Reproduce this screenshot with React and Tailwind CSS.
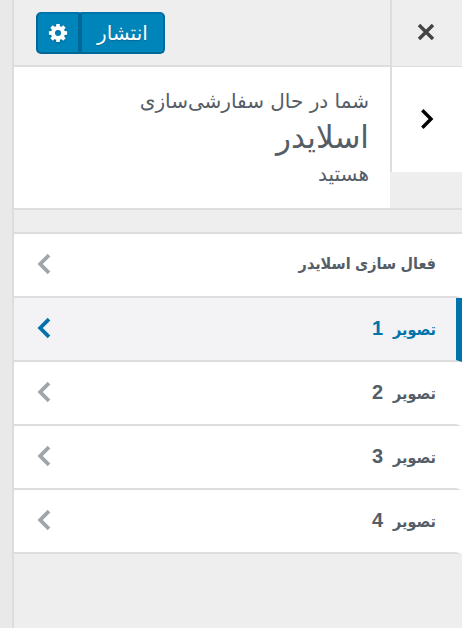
const SECTIONS = [
  { id: "enable", label: "فعال سازی اسلایدر" },
  { id: "image-1", label: "تصویر", number: 1, active: true },
  { id: "image-2", label: "تصویر", number: 2 },
  { id: "image-3", label: "تصویر", number: 3 },
  { id: "image-4", label: "تصویر", number: 4 },
];

const GEAR_TEETH = [0, 45, 90, 135, 180, 225, 270, 315];

const GearIcon = () => (
  <svg viewBox="0 0 20 20" className="h-5 w-5 drop-shadow-[0_1px_1px_#006799]" fill="none" aria-hidden="true">
    <circle cx="10" cy="10" r="5" stroke="currentColor" strokeWidth="4" />
    {GEAR_TEETH.map((angle) => (
      <path key={angle} d="M8 4 8.3 0.9h3.4L12 4z" fill="currentColor" transform={`rotate(${angle} 10 10)`} />
    ))}
  </svg>
);

const CloseIcon = () => (
  <svg viewBox="0 0 18 18" className="h-[18px] w-[18px]" fill="none" stroke="currentColor" strokeWidth="3.4" aria-hidden="true">
    <path d="M2 2l14 14M16 2L2 16" />
  </svg>
);

const BackIcon = () => (
  <svg viewBox="0 0 14 22" className="h-[22px] w-3.5" fill="none" stroke="currentColor" strokeWidth="3.4" aria-hidden="true">
    <path d="M2.3 2.3L11 11l-8.7 8.7" />
  </svg>
);

const ChevronIcon = () => (
  <svg viewBox="0 0 14 22" className="h-[22px] w-3.5" fill="none" stroke="currentColor" strokeWidth="3.8" aria-hidden="true">
    <path d="M12 2.2L3.2 11l8.8 8.8" />
  </svg>
);

const Header = () => (
  <header className="flex h-[67px]">
    <button
      type="button"
      aria-label="بستن"
      className="flex w-[72px] items-center justify-center border-b border-l-2 border-[#ddd] pr-0.5 pb-0.5 text-[#444]"
    >
      <CloseIcon />
    </button>
    <div className="flex flex-1 items-center justify-end border-b-2 border-[#ddd] pl-[22px]">
      <div className="flex h-[42px] text-white">
        <button
          type="button"
          className="rounded-r-[5px] border-2 border-[#006799] border-t-[#0073aa] bg-[#0085ba] px-[15px] text-xl leading-none [text-shadow:0_1px_1px_#006799]"
        >
          انتشار
        </button>
        <button
          type="button"
          aria-label="تنظیمات"
          className="rounded-l-[5px] border-2 border-[#006799] border-t-[#0073aa] bg-[#0085ba] px-[10px]"
        >
          <GearIcon />
        </button>
      </div>
    </div>
  </header>
);

const PanelTitle = () => (
  <div className="flex items-start border-b-2 border-[#ddd]">
    <button
      type="button"
      aria-label="بازگشت"
      className="flex h-[105px] w-[72px] items-center justify-center border-l-2 border-[#ddd] bg-white pb-0.5 text-black"
    >
      <BackIcon />
    </button>
    <h2 className="flex-1 bg-white pt-5 pr-[21px] pb-5 text-xl leading-7 text-[#555d66]">
      <span className="block">شما در حال سفارشی‌سازی</span>
      <span className="block text-[31px] leading-[45px]">اسلایدر</span>
      <span className="block">هستید</span>
    </h2>
  </div>
);

const SectionRow = ({ label, number, active }) => (
  <li>
    <button
      type="button"
      className={`flex h-16 w-full items-center justify-between border-r-[6px] border-b-2 border-b-[#ddd] pr-5 pb-0.5 pl-[23px] ${
        active
          ? "border-r-[#0073aa] bg-[#f3f3f5] text-[#0073aa]"
          : "border-r-white bg-white text-[#555d66]"
      }`}
    >
      <span className="flex items-baseline gap-2.5 font-bold">
        <span className="text-base">{label}</span>
        {number && <span className="text-xl">{number}</span>}
      </span>
      <span className={active ? "text-[#0073aa]" : "text-[#a0a5aa]"}>
        <ChevronIcon />
      </span>
    </button>
  </li>
);

const App = () => (
  <div
    dir="rtl"
    className="flex min-h-screen bg-[#e9e9e9] font-['DejaVu_Sans','Liberation_Sans',sans-serif]"
  >
    <main className="min-w-0 flex-1 border-l-2 border-[#ddd] bg-[#eee]">
      <Header />
      <PanelTitle />
      <ul className="mt-[22px] border-t-2 border-[#ddd] font-['Liberation_Sans','DejaVu_Sans_Condensed','DejaVu_Sans',sans-serif]">
        {SECTIONS.map((section) => (
          <SectionRow key={section.id} label={section.label} number={section.number} active={section.active} />
        ))}
      </ul>
    </main>
    <div className="w-3" />
  </div>
);

export default App;
